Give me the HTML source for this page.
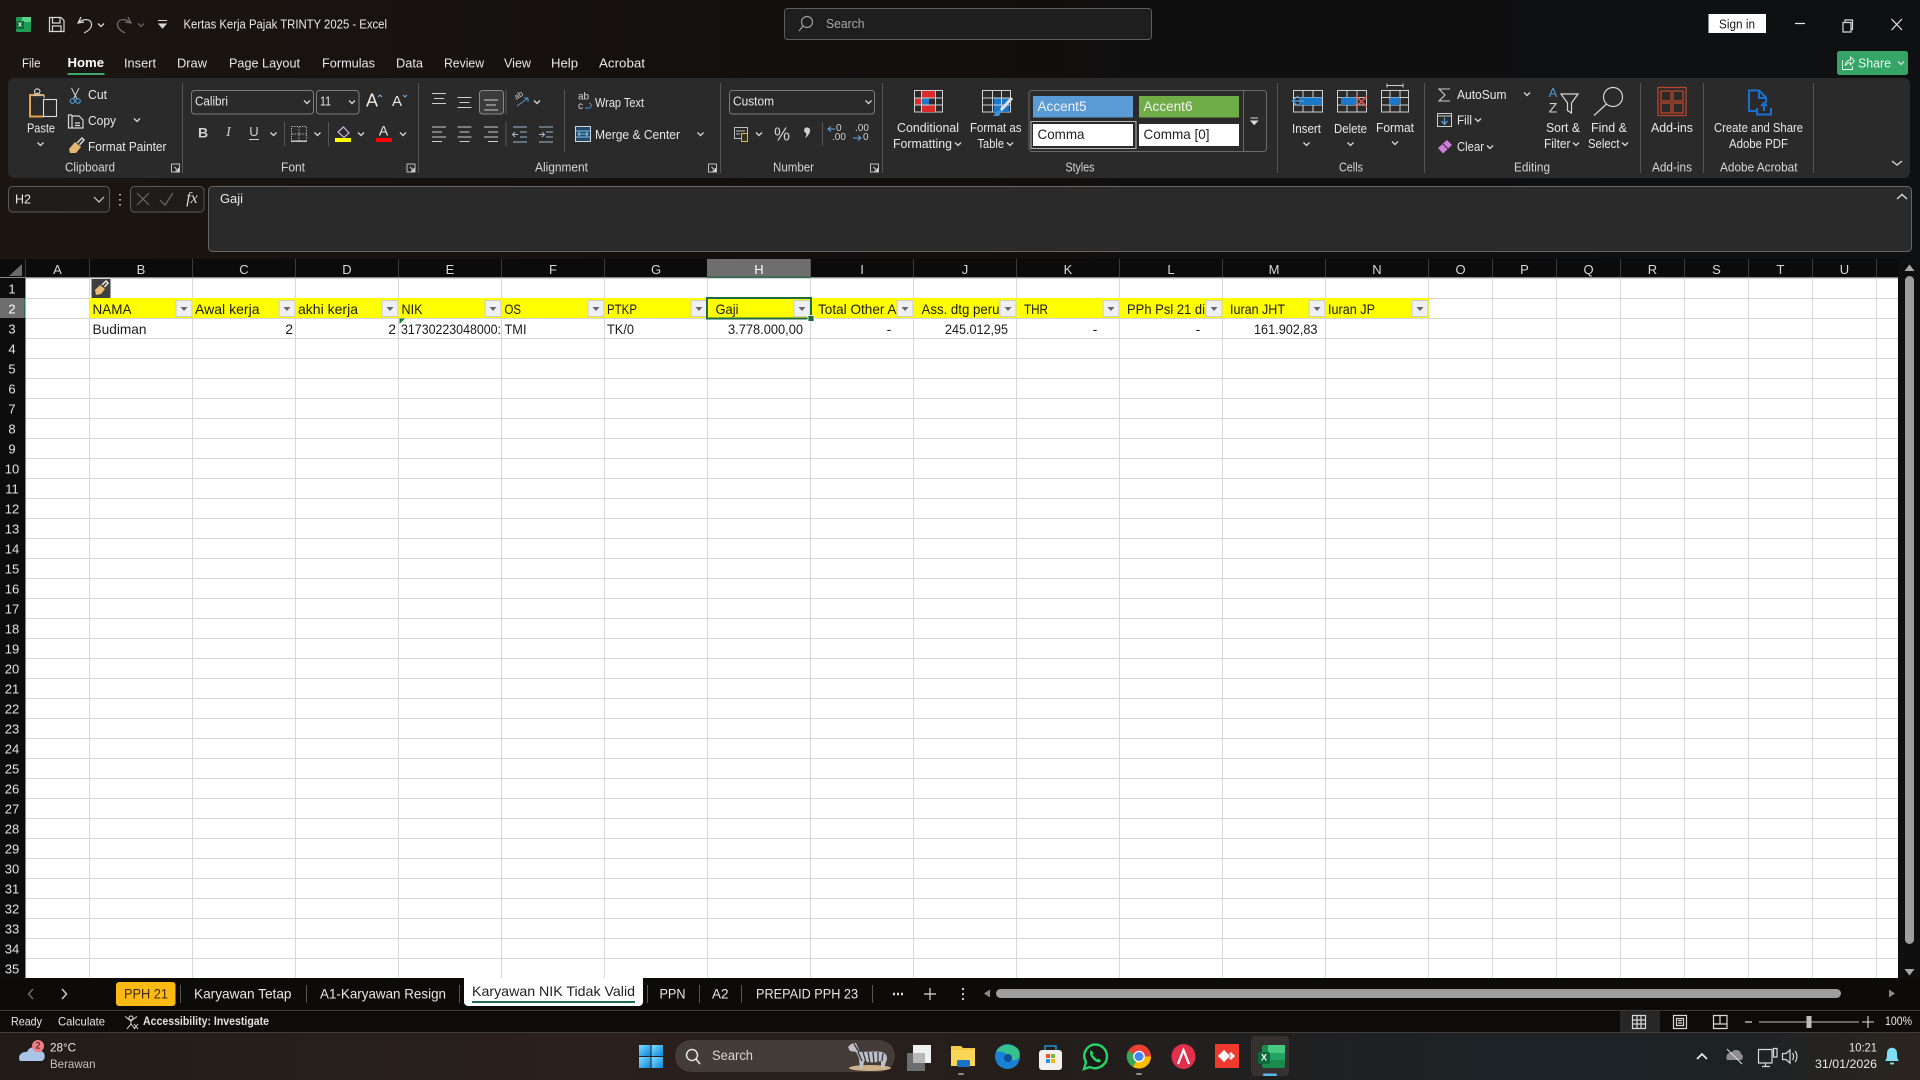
<!DOCTYPE html>
<html lang="id"><head><meta charset="utf-8"><title>Kertas Kerja Pajak TRINTY 2025 - Excel</title>
<style>
html,body{margin:0;padding:0;background:#111;width:1920px;height:1080px;overflow:hidden}
svg{display:block;position:absolute;left:0;top:0}
text{font-family:"Liberation Sans",sans-serif;dominant-baseline:central;fill:#e8e8e8;font-size:13px;transform:translateY(-.5px)}
.c{font-size:14px;fill:#1c1c1c}
.l{font-size:12.5px;fill:#d4d4d4}
.h{font-size:13px;fill:#d8d8d8;text-anchor:middle;transform:none}
.r{font-size:13px;fill:#e4e4e4;text-anchor:middle;transform:translateY(.5px)}
.m{text-anchor:middle}
.e{text-anchor:end}
.s{fill:none;stroke:#d8d8d8;stroke-width:1.2}
.d{fill:none;stroke:#6f6f6f;stroke-width:1.2}
</style></head><body>
<svg width="1920" height="1080" viewBox="0 0 1920 1080" xmlns="http://www.w3.org/2000/svg">
<defs>
<linearGradient id="mica" x1="0" x2="1" y1="0" y2="0"><stop offset="0" stop-color="#1c1612"/><stop offset=".4" stop-color="#130f0d"/><stop offset=".7" stop-color="#0f0f10"/><stop offset="1" stop-color="#0e1012"/></linearGradient>
<linearGradient id="tb" x1="0" x2="1" y1="0" y2="0"><stop offset="0" stop-color="#221c19"/><stop offset=".3" stop-color="#2a211c"/><stop offset=".55" stop-color="#241e1b"/><stop offset=".78" stop-color="#1c2226"/><stop offset=".9" stop-color="#1d2225"/><stop offset="1" stop-color="#2b241f"/></linearGradient>
<linearGradient id="win" x1="0" x2="1" y1="0" y2="1"><stop offset="0" stop-color="#7fdcff"/><stop offset="1" stop-color="#0b86dc"/></linearGradient>
<pattern id="rows" x="0" y="279" width="10" height="20" patternUnits="userSpaceOnUse"><rect y="19" width="10" height="1" fill="#d6d6d6"/></pattern>
<path id="ch" d="M-3 -1.5L0 1.5L3 -1.5" fill="none" stroke="#d8d8d8" stroke-width="1.3"/>
<g id="lc"><rect x="-4" y="-4" width="8" height="8" fill="none" stroke="#bdbdbd"/><path d="M-1 -1L3 3M3 0V3H0" fill="none" stroke="#d8d8d8"/></g>
<g id="fb"><rect width="16" height="16" fill="#eef0f6" stroke="#c4c4cc" stroke-width=".8"/><path d="M4.5 6.5H11.5L8 10.5Z" fill="#666"/></g>
</defs>

<rect width="1920" height="1080" fill="url(#mica)"/>

<!-- Title bar -->
<rect x="16" y="17" width="15" height="15" rx="1.5" fill="#1f9d55"/><rect x="22" y="17" width="9" height="5" fill="#5ad08a"/><rect x="16" y="21" width="8" height="8" fill="#0f6b3a"/><text x="20" y="25.5" class="m" style="font-size:7px;font-weight:bold;fill:#fff">x</text>
<path class="s" d="M49.5 17.5H61L64 20.5V31.5H49.5ZM52.5 17.5V23H60V17.5M52.5 31.5V26H61V31.5"/>
<path class="s" stroke-width="1.5" d="M81 17L78 23L84 22M78.5 22.5C84 18 91 19 91.5 24C92 28 88 31 84 33"/>
<use href="#ch" x="101" y="25"/>
<path class="d" d="M128 17L131 23L125 22M130.5 22.5C125 18 118 19 117.5 24C117 28 121 31 125 33"/>
<use href="#ch" x="141" y="25" opacity=".4"/>
<path d="M158 20.5H167M159 24H166L162.5 28Z" fill="#d8d8d8" stroke="#d8d8d8" stroke-width="1"/>
<text x="183.5" y="25" textLength="203.5" lengthAdjust="spacingAndGlyphs" style="font-size:12.5px">Kertas Kerja Pajak TRINTY 2025  -  Excel</text>

<rect x="784.5" y="8.5" width="367" height="31" rx="3" fill="#1e1e1e" stroke="#5c5c5c"/>
<circle cx="807" cy="22" r="5.5" fill="none" stroke="#9c9c9c" stroke-width="1.2"/><path d="M803 26L799 31" stroke="#9c9c9c" stroke-width="1.2"/>
<text x="826" y="24" textLength="38.5" lengthAdjust="spacingAndGlyphs" style="fill:#a8a8a8">Search</text>

<rect x="1708.5" y="14" width="57.5" height="19" fill="#fff"/>
<text x="1719" y="25" textLength="36" lengthAdjust="spacingAndGlyphs" style="fill:#1a1a1a;font-size:12.5px">Sign in</text>
<path d="M1795 23.5H1805" stroke="#e8e8e8" stroke-width="1.2"/>
<path class="s" d="M1843 22.5H1851V32H1843ZM1845 22.5V20H1852.5V29.5H1851"/>
<path d="M1891.5 19L1902 30M1902 19L1891.5 30" stroke="#e8e8e8" stroke-width="1.2"/>

<!-- Tabs -->
<text x="22" y="63.5" textLength="18.5" lengthAdjust="spacingAndGlyphs">File</text>
<text x="67.5" y="63.5" textLength="36.5" lengthAdjust="spacingAndGlyphs" style="font-weight:bold;fill:#fff;font-size:12.5px">Home</text>
<rect x="67.5" y="73" width="37" height="2" fill="#3fa66f"/>
<text x="124" y="63.5" textLength="32" lengthAdjust="spacingAndGlyphs">Insert</text>
<text x="177" y="63.5" textLength="30" lengthAdjust="spacingAndGlyphs">Draw</text>
<text x="229" y="63.5" textLength="71" lengthAdjust="spacingAndGlyphs">Page Layout</text>
<text x="322" y="63.5" textLength="53" lengthAdjust="spacingAndGlyphs">Formulas</text>
<text x="396" y="63.5" textLength="27" lengthAdjust="spacingAndGlyphs">Data</text>
<text x="444" y="63.5" textLength="40" lengthAdjust="spacingAndGlyphs">Review</text>
<text x="504" y="63.5" textLength="27" lengthAdjust="spacingAndGlyphs">View</text>
<text x="551" y="63.5" textLength="27" lengthAdjust="spacingAndGlyphs">Help</text>
<text x="599" y="63.5" textLength="46" lengthAdjust="spacingAndGlyphs">Acrobat</text>
<rect x="1837" y="51" width="71" height="24" rx="2.5" fill="#35a567"/>
<path d="M1842.5 60V69.5H1852.5V66M1845 66C1846 61 1848.5 60 1850.5 60V57L1854.5 61L1850.5 65V62.5C1848.5 62.5 1847 63.5 1845 66Z" fill="none" stroke="#e8f5ec" stroke-width=".9"/>
<text x="1858" y="63.5" textLength="33" lengthAdjust="spacingAndGlyphs" style="fill:#eef7f1">Share</text>
<use href="#ch" x="1901" y="63"/>

<!-- Ribbon -->
<rect x="8" y="78" width="1902" height="100" rx="6" fill="#2a2a2a"/>
<g fill="#555">
<rect x="182" y="83" width="1" height="90"/><rect x="418" y="83" width="1" height="90"/><rect x="720" y="83" width="1" height="90"/><rect x="882" y="83" width="1" height="90"/><rect x="1277" y="83" width="1" height="90"/><rect x="1424" y="83" width="1" height="90"/><rect x="1640" y="83" width="1" height="90"/><rect x="1703" y="83" width="1" height="90"/><rect x="1813" y="83" width="1" height="90"/>
<rect x="284" y="122" width="1" height="24"/><rect x="328" y="122" width="1" height="24"/><rect x="505.5" y="90" width="1" height="24"/><rect x="505.5" y="122" width="1" height="24"/><rect x="564" y="90" width="1" height="62"/><rect x="822" y="122" width="1" height="24"/>
</g>
<!-- Clipboard -->
<path d="M44 95H30V116.5H44" fill="none" stroke="#e0a24a" stroke-width="2"/><path d="M44 95V98M35 93.5H39L40 91.5C40 88 34.5 88 34.5 91.5ZM33.5 95.5H41" fill="none" stroke="#c9c9c9" stroke-width="1.2"/>
<rect x="43.5" y="99.5" width="13" height="17" fill="#2a2a2a" stroke="#dcdcdc" stroke-width="1.1"/>
<text x="41" y="128.5" class="m" textLength="28" lengthAdjust="spacingAndGlyphs">Paste</text>
<use href="#ch" x="40.5" y="144"/>
<path d="M71.5 88L77 99M79 88L73.5 99" stroke="#d4d4d4" fill="none"/><circle cx="72.5" cy="101" r="2.3" fill="none" stroke="#4f9ad1" stroke-width="1.2"/><circle cx="78" cy="101" r="2.3" fill="none" stroke="#4f9ad1" stroke-width="1.2"/>
<text x="88" y="95" textLength="19" lengthAdjust="spacingAndGlyphs">Cut</text>
<path class="s" d="M72 115H68.5V128H72M72 128V115M72 116H79L83 120V128H72ZM75 123H80M75 125.5H80"/>
<text x="88" y="121" textLength="28" lengthAdjust="spacingAndGlyphs">Copy</text><use href="#ch" x="137" y="120"/>
<path d="M69 149L75 142L81 147L76 153L70 153Z" fill="#e5b872"/><path d="M77 143L82 138L84 140L79.5 145" fill="none" stroke="#d8d8d8" stroke-width="1.5"/>
<text x="88" y="147" textLength="78.5" lengthAdjust="spacingAndGlyphs">Format Painter</text>
<text x="90" y="168" class="l m" textLength="50" lengthAdjust="spacingAndGlyphs">Clipboard</text><use href="#lc" x="175.5" y="168"/>
<!-- Font -->
<rect x="191.5" y="90.5" width="122" height="23.5" rx="3" fill="#2a2a2a" stroke="#7c7c7c"/>
<text x="195" y="102" textLength="33" lengthAdjust="spacingAndGlyphs" style="font-size:12.5px">Calibri</text><use href="#ch" x="307" y="102"/>
<rect x="316.5" y="90.5" width="42.5" height="23.5" rx="3" fill="#2a2a2a" stroke="#7c7c7c"/>
<text x="320" y="102" textLength="11" lengthAdjust="spacingAndGlyphs" style="font-size:12.5px">11</text><use href="#ch" x="352" y="102"/>
<text x="372" y="101" class="m" style="font-size:18px">A</text><path d="M378 97L380 95L382 97" fill="none" stroke="#6db4ea"/>
<text x="397" y="102" class="m" style="font-size:15px">A</text><path d="M403 95L405 97L407 95" fill="none" stroke="#6db4ea"/>
<text x="203" y="133" class="m" style="font-weight:bold;font-size:14px;fill:#cfcfcf">B</text>
<text x="228.5" y="133" class="m" style="font-family:'Liberation Serif',serif;font-style:italic;font-size:14px;fill:#cfcfcf">I</text>
<text x="254" y="132" class="m" style="font-size:13px;fill:#cfcfcf">U</text><rect x="249" y="139" width="10" height="1" fill="#cfcfcf"/>
<use href="#ch" x="273.5" y="134"/>
<rect x="291.5" y="126.5" width="15" height="15" fill="none" stroke="#bdbdbd" stroke-dasharray="1.3 1.3"/><path d="M299 127V141M292 134H306" stroke="#bdbdbd" stroke-dasharray="1.3 1.3"/><rect x="291" y="140.5" width="16" height="1.2" fill="#dcdcdc"/>
<use href="#ch" x="317.5" y="134"/>
<path d="M338 132L343.5 127L349 133L344 137.5Z" fill="none" stroke="#c5b3ea" stroke-width="1.2"/>
<rect x="335" y="138" width="16" height="4" fill="#ffff00"/><use href="#ch" x="361" y="134"/>
<text x="383.5" y="131" class="m" style="font-size:14px">A</text><rect x="376" y="138" width="16" height="4" fill="#ff0000"/><use href="#ch" x="403" y="134"/>
<text x="293" y="168" class="l m" textLength="24" lengthAdjust="spacingAndGlyphs">Font</text><use href="#lc" x="411" y="168"/>
<!-- Alignment -->
<rect x="479.5" y="90.5" width="24" height="23.5" rx="3" fill="#3b3b3b" stroke="#8a8a8a"/>
<path d="M432 93.5H446M434 98.5H444M432 103.5H446M457.5 97.5H471.5M459.5 102.5H469.5M457.5 107.5H471.5" stroke="#cfcfcf" fill="none"/>
<path d="M484 100H498M486 105H496M484 110H498" stroke="#cfcfcf" fill="none"/>
<text x="515" y="98" style="font-size:8px;fill:#cfcfcf;transform:rotate(-35deg);transform-origin:515px 98px">ab</text><path d="M517 106L528 98M528 98H524M528 98V102" stroke="#4d9ad8" fill="none"/><use href="#ch" x="537" y="102"/>
<path d="M432 127H446M432 132H442M432 137H446M432 141.5H442M457.5 127H471.5M459.5 132H469.5M457.5 137H471.5M459.5 141.5H469.5M484 127H498M488 132H498M484 137H498M488 141.5H498" stroke="#cfcfcf" fill="none"/>
<path d="M513 127H527M513 142H527M520 132H527M520 137H527M518 134.5H512.5M515 132L512.5 134.5L515 137" stroke="#9fb8cf" fill="none"/>
<path d="M539 127H553M539 142H553M546 132H553M546 137H553M539 134.5H544.5M542 132L544.5 134.5L542 137" stroke="#9fb8cf" fill="none"/>
<text x="578" y="97.5" style="font-size:10px;fill:#d8d8d8">ab</text><text x="578" y="107" style="font-size:10px;fill:#d8d8d8">c</text><path d="M585 108H589C592 108 592 103 589 103" stroke="#4d9ad8" fill="none"/>
<text x="595" y="103" textLength="49" lengthAdjust="spacingAndGlyphs">Wrap Text</text>
<rect x="575.5" y="126.5" width="15" height="15" fill="#274a66" stroke="#c8d8e6"/><path d="M576 131H590M576 137H590M578 134H588M580 132L578 134L580 136M586 132L588 134L586 136" stroke="#7fc0ee" fill="none"/>
<text x="595" y="135" textLength="85" lengthAdjust="spacingAndGlyphs">Merge &amp; Center</text><use href="#ch" x="700.5" y="134"/>
<text x="561.5" y="168" class="l m" textLength="53" lengthAdjust="spacingAndGlyphs">Alignment</text><use href="#lc" x="712.5" y="168"/>
<!-- Number -->
<rect x="729.5" y="90.5" width="145" height="23.5" rx="3" fill="#2a2a2a" stroke="#7c7c7c"/>
<text x="733" y="102" textLength="41" lengthAdjust="spacingAndGlyphs" style="font-size:12.5px">Custom</text><use href="#ch" x="868.5" y="102"/>
<rect x="734.5" y="127.5" width="13" height="11" fill="none" stroke="#bdbdbd"/><rect x="741.5" y="133.5" width="6" height="8" fill="#3a3218" stroke="#d9b94f" stroke-width="1"/><path d="M736 131H745M736 134H740" stroke="#bdbdbd"/>
<use href="#ch" x="759" y="134"/>
<text x="782" y="135" class="m" style="font-size:18px;fill:#cfcfcf">%</text>
<path d="M806 127.5C810 127 811 130 809.5 133C808.5 135 807 137 805 138C806.5 135.5 806.5 134 806 133C803.5 132.5 803.5 128 806 127.5Z" fill="#cfcfcf"/>
<text x="836" y="129" style="font-size:10px;fill:#d0d0d0">0</text><text x="832" y="138" style="font-size:10px;fill:#d0d0d0">.00</text><path d="M835 129H828M831 126.5L828 129L831 131.5" stroke="#5aa6df" fill="none"/>
<text x="855" y="129" style="font-size:10px;fill:#d0d0d0">.00</text><text x="863" y="138" style="font-size:10px;fill:#d0d0d0">0</text><path d="M853 138H861M858 135.5L861 138L858 140.5" stroke="#5aa6df" fill="none"/>
<text x="793.5" y="168" class="l m" textLength="41" lengthAdjust="spacingAndGlyphs">Number</text><use href="#lc" x="874.5" y="168"/>
<!-- Conditional -->
<rect x="914.5" y="90.5" width="28" height="21.5" fill="none" stroke="#cfcfcf"/>
<rect x="921" y="91" width="14" height="7" fill="#d92b2b"/><rect x="915" y="98" width="7" height="7" fill="#d92b2b"/><rect x="922" y="98" width="7" height="7" fill="#1c78c8"/><rect x="921" y="105" width="14" height="7" fill="#d92b2b"/>
<path d="M921.5 90V112M935.5 90V112M914.5 98H942M914.5 105H942" stroke="#cfcfcf" fill="none"/>
<text x="897" y="128" textLength="62" lengthAdjust="spacingAndGlyphs">Conditional</text>
<text x="893" y="144" textLength="59" lengthAdjust="spacingAndGlyphs">Formatting</text><use href="#ch" x="958" y="144"/>
<rect x="982.5" y="90.5" width="28" height="21.5" fill="none" stroke="#cfcfcf"/><rect x="994" y="98" width="15" height="14" fill="#1c78c8"/>
<path d="M992.5 90V112M1001.5 90V112M982.5 98H1011M982.5 105H1011" stroke="#cfcfcf" fill="none"/>
<path d="M1012 98L1001 110" stroke="#e0e0e0" stroke-width="3"/><path d="M998 110L1002 111L999 116L993 116Z" fill="#3d8fd6"/>
<text x="970" y="128" textLength="51.5" lengthAdjust="spacingAndGlyphs">Format as</text>
<text x="977.5" y="144" textLength="26.5" lengthAdjust="spacingAndGlyphs">Table</text><use href="#ch" x="1010" y="144"/>
<!-- Styles gallery -->
<rect x="1029" y="90.5" width="237.5" height="61" rx="3" fill="#2a2a2a" stroke="#6a6a6a"/>
<path d="M1243.5 90.5V151.5" stroke="#6a6a6a"/>
<rect x="1033" y="96" width="100" height="21.5" fill="#5b9bd5"/><text x="1037.5" y="106.5" textLength="49" lengthAdjust="spacingAndGlyphs" style="font-size:14px;fill:#f2f2f2">Accent5</text>
<rect x="1139" y="96" width="100" height="21.5" fill="#70ad47"/><text x="1143.5" y="106.5" textLength="49" lengthAdjust="spacingAndGlyphs" style="font-size:14px;fill:#f2f2f2">Accent6</text>
<rect x="1031" y="121.5" width="105" height="27" fill="none" stroke="#b8b8b8"/>
<rect x="1033" y="124" width="100" height="22" fill="#fff"/><text x="1037.5" y="134.5" textLength="47" lengthAdjust="spacingAndGlyphs" style="font-size:14px;fill:#222">Comma</text>
<rect x="1139" y="124" width="100" height="22" fill="#fff"/><text x="1143.5" y="134.5" textLength="66" lengthAdjust="spacingAndGlyphs" style="font-size:14px;fill:#222">Comma [0]</text>
<path d="M1250.5 118H1258M1251 121H1257.5L1254.2 124.5Z" fill="#d8d8d8" stroke="#d8d8d8"/>
<text x="1080" y="168" class="l m" textLength="29" lengthAdjust="spacingAndGlyphs">Styles</text>
<!-- Cells -->
<g fill="none" stroke="#cfcfcf"><rect x="1293.5" y="90.5" width="29" height="21.5"/><path d="M1303 90V112M1313 90V112M1293 97.5H1323M1293 105H1323"/></g>
<rect x="1299" y="97.5" width="23" height="7.5" fill="#1c78c8"/><path d="M1304 101H1293M1298 96L1292.5 101L1298 106" fill="none" stroke="#4f9ad1" stroke-width="1.5"/>
<g fill="none" stroke="#cfcfcf"><rect x="1337.5" y="90.5" width="29" height="21.5"/><path d="M1347 90V112M1357 90V112M1337 97.5H1367M1337 105H1367"/></g>
<rect x="1341" y="97.5" width="15" height="7.5" fill="#1c78c8"/><path d="M1356 96L1367 107M1367 96L1356 107" stroke="#d4544c" stroke-width="1.6"/>
<g fill="none" stroke="#cfcfcf"><rect x="1381.5" y="90.5" width="27" height="21.5"/><path d="M1390 90V112M1400 90V112M1381 97.5H1409M1381 105H1409M1387 85.5H1403M1387 83.5V87.5M1403 83.5V87.5"/></g>
<rect x="1390" y="97.5" width="10" height="7.5" fill="#1c78c8"/>
<text x="1306.5" y="129" class="m" textLength="29" lengthAdjust="spacingAndGlyphs">Insert</text><use href="#ch" x="1306.5" y="144"/>
<text x="1350.5" y="129" class="m" textLength="33" lengthAdjust="spacingAndGlyphs">Delete</text><use href="#ch" x="1350.5" y="144"/>
<text x="1395" y="128" class="m" textLength="38" lengthAdjust="spacingAndGlyphs">Format</text><use href="#ch" x="1395" y="143"/>
<text x="1351" y="168" class="l m" textLength="24" lengthAdjust="spacingAndGlyphs">Cells</text>
<!-- Editing -->
<path d="M1450 89H1439L1445 95L1439 101H1450" fill="none" stroke="#cfcfcf" stroke-width="1.1"/>
<text x="1457" y="95" textLength="49.5" lengthAdjust="spacingAndGlyphs">AutoSum</text><use href="#ch" x="1527" y="94"/>
<rect x="1437.5" y="113.5" width="14" height="13" fill="none" stroke="#cfcfcf"/><path d="M1437.5 116H1451.5" stroke="#cfcfcf"/><path d="M1444.5 117.5V124M1441.5 121L1444.5 124.5L1447.5 121" fill="none" stroke="#5aa6df" stroke-width="1.2"/>
<text x="1457" y="120.5" textLength="15" lengthAdjust="spacingAndGlyphs">Fill</text><use href="#ch" x="1478" y="120"/>
<path d="M1438 148L1447 140L1452 145L1443 153.5Z" fill="#cf7fd8"/><path d="M1443 144L1448 149" stroke="#2a2a2a"/>
<text x="1457" y="147" textLength="27" lengthAdjust="spacingAndGlyphs">Clear</text><use href="#ch" x="1490" y="147"/>
<text x="1553" y="93" class="m" style="font-size:13px;fill:#4f9ad1">A</text><text x="1553" y="108" class="m" style="font-size:14px;fill:#d0d0d0">Z</text>
<path d="M1561 94H1578L1571.5 103V113L1567.5 110.5V103Z" fill="none" stroke="#d4d4d4" stroke-width="1.2"/>
<text x="1546" y="128" textLength="34" lengthAdjust="spacingAndGlyphs">Sort &amp;</text>
<text x="1544" y="144" textLength="26.5" lengthAdjust="spacingAndGlyphs">Filter</text><use href="#ch" x="1576" y="144"/>
<circle cx="1613" cy="97" r="9.5" fill="none" stroke="#d4d4d4" stroke-width="1.2"/><path d="M1606.5 104L1594 115.5" stroke="#d4d4d4" stroke-width="1.2"/>
<text x="1591" y="128" textLength="36" lengthAdjust="spacingAndGlyphs">Find &amp;</text>
<text x="1588" y="144" textLength="31.5" lengthAdjust="spacingAndGlyphs">Select</text><use href="#ch" x="1625" y="144"/>
<text x="1532" y="168" class="l m" textLength="36" lengthAdjust="spacingAndGlyphs">Editing</text>
<!-- Add-ins -->
<g fill="none" stroke="#b7452c" stroke-width="1.3"><rect x="1658" y="87.5" width="28" height="28"/><rect x="1661" y="91" width="10" height="10"/><rect x="1673" y="91" width="10" height="10"/><rect x="1661" y="103" width="10" height="10"/><rect x="1673" y="103" width="10" height="10"/></g>
<text x="1672" y="128" class="m" textLength="42" lengthAdjust="spacingAndGlyphs">Add-ins</text>
<text x="1672" y="168" class="l m" textLength="40" lengthAdjust="spacingAndGlyphs">Add-ins</text>
<!-- Acrobat -->
<path d="M1756 111H1749V90.5H1759L1766 97.5V103M1759 91V98H1766" fill="none" stroke="#1a6fd0" stroke-width="2"/><path d="M1757 108V114.5H1771V108M1764 111V103M1761 106L1764 103L1767 106" fill="none" stroke="#1a6fd0" stroke-width="2"/>
<text x="1714" y="128" textLength="89" lengthAdjust="spacingAndGlyphs">Create and Share</text>
<text x="1729" y="144" textLength="59" lengthAdjust="spacingAndGlyphs">Adobe PDF</text>
<text x="1720" y="168" class="l" textLength="77.5" lengthAdjust="spacingAndGlyphs">Adobe Acrobat</text>
<path d="M1892 161L1897 165L1902 161" fill="none" stroke="#d8d8d8" stroke-width="1.3"/>

<!-- Formula bar -->
<rect x="8.5" y="186.5" width="101" height="25.5" rx="4" fill="#1f1c1a" stroke="#5a5a5a"/>
<text x="15" y="200" textLength="16" lengthAdjust="spacingAndGlyphs" style="font-size:12.5px">H2</text>
<path d="M94 197L99 202L104 197" fill="none" stroke="#cfcfcf" stroke-width="1.2"/>
<path d="M120 194V195.5M120 199V200.5M120 204V205.5" stroke="#cfcfcf" stroke-width="1.6"/>
<rect x="130.5" y="186.5" width="73.5" height="25.5" rx="4" fill="#1f1c1a" stroke="#5a5a5a"/>
<path d="M137 193L149 205M149 193L137 205" stroke="#6a6a6a" stroke-width="1.2"/><path d="M160 200L165 205L173 193" fill="none" stroke="#6a6a6a" stroke-width="1.2"/>
<text x="192" y="199" class="m" style="font-family:'Liberation Serif',serif;font-style:italic;font-size:16px;fill:#dcdcdc">fx</text>
<rect x="208.5" y="186.5" width="1703" height="65" rx="4" fill="#2a2a2a" stroke="#6a6664"/>
<text x="220" y="199.5" textLength="23" lengthAdjust="spacingAndGlyphs" style="font-size:12.5px">Gaji</text>
<path d="M1897 199L1902 194.5L1907 199" fill="none" stroke="#d8d8d8" stroke-width="1.4"/>

<!-- Grid -->
<rect x="0" y="259" width="1898" height="19" fill="#0b0b0b"/>
<rect x="0" y="278" width="25.5" height="700" fill="#0c0c0c"/>
<rect x="25.5" y="278" width="1872.5" height="700" fill="#fff"/>
<rect x="25.5" y="278" width="1872.5" height="700" fill="url(#rows)"/>
<path fill="none" stroke="#d6d6d6" d="M89.5 278V978M192.5 278V978M295.5 278V978M398.5 278V978M501.5 278V978M604.5 278V978M707.5 278V978M810.5 278V978M913.5 278V978M1016.5 278V978M1119.5 278V978M1222.5 278V978M1325.5 278V978M1428.5 278V978M1492.5 278V978M1556.5 278V978M1620.5 278V978M1684.5 278V978M1748.5 278V978M1812.5 278V978M1876.5 278V978"/>
<path fill="none" stroke="#3c3c3c" d="M25.5 259V278M89.5 259V278M192.5 259V278M295.5 259V278M398.5 259V278M501.5 259V278M604.5 259V278M707.5 259V278M810.5 259V278M913.5 259V278M1016.5 259V278M1119.5 259V278M1222.5 259V278M1325.5 259V278M1428.5 259V278M1492.5 259V278M1556.5 259V278M1620.5 259V278M1684.5 259V278M1748.5 259V278M1812.5 259V278M1876.5 259V278"/>
<rect x="0" y="277" width="1898" height="1" fill="#8a8a8a"/>
<path d="M9 276H22V264Z" fill="#6a6a6a"/>
<rect x="707" y="259" width="103.5" height="19" fill="#6e6e6e"/><rect x="707" y="276.5" width="103.5" height="1.5" fill="#2f6b4f"/>
<text x="57.5" y="269.5" class="h">A</text><text x="141" y="269.5" class="h">B</text><text x="244" y="269.5" class="h">C</text><text x="347" y="269.5" class="h">D</text><text x="450" y="269.5" class="h">E</text><text x="553" y="269.5" class="h">F</text><text x="656" y="269.5" class="h">G</text><text x="759" y="269.5" class="h" style="fill:#fff">H</text><text x="862" y="269.5" class="h">I</text><text x="965" y="269.5" class="h">J</text><text x="1068" y="269.5" class="h">K</text><text x="1171" y="269.5" class="h">L</text><text x="1274" y="269.5" class="h">M</text><text x="1377" y="269.5" class="h">N</text><text x="1460.5" y="269.5" class="h">O</text><text x="1524.5" y="269.5" class="h">P</text><text x="1588.5" y="269.5" class="h">Q</text><text x="1652.5" y="269.5" class="h">R</text><text x="1716.5" y="269.5" class="h">S</text><text x="1780.5" y="269.5" class="h">T</text><text x="1844.5" y="269.5" class="h">U</text>
<rect x="0" y="298" width="25.5" height="20" fill="#6e6e6e"/><rect x="24" y="298" width="1.5" height="20" fill="#2f6b4f"/>
<text x="12" y="288.5" class="r">1</text><text x="12" y="308.5" class="r" style="fill:#fff">2</text><text x="12" y="328.5" class="r">3</text><text x="12" y="348.5" class="r">4</text><text x="12" y="368.5" class="r">5</text><text x="12" y="388.5" class="r">6</text><text x="12" y="408.5" class="r">7</text><text x="12" y="428.5" class="r">8</text><text x="12" y="448.5" class="r">9</text><text x="12" y="468.5" class="r">10</text><text x="12" y="488.5" class="r">11</text><text x="12" y="508.5" class="r">12</text><text x="12" y="528.5" class="r">13</text><text x="12" y="548.5" class="r">14</text><text x="12" y="568.5" class="r">15</text><text x="12" y="588.5" class="r">16</text><text x="12" y="608.5" class="r">17</text><text x="12" y="628.5" class="r">18</text><text x="12" y="648.5" class="r">19</text><text x="12" y="668.5" class="r">20</text><text x="12" y="688.5" class="r">21</text><text x="12" y="708.5" class="r">22</text><text x="12" y="728.5" class="r">23</text><text x="12" y="748.5" class="r">24</text><text x="12" y="768.5" class="r">25</text><text x="12" y="788.5" class="r">26</text><text x="12" y="808.5" class="r">27</text><text x="12" y="828.5" class="r">28</text><text x="12" y="848.5" class="r">29</text><text x="12" y="868.5" class="r">30</text><text x="12" y="888.5" class="r">31</text><text x="12" y="908.5" class="r">32</text><text x="12" y="928.5" class="r">33</text><text x="12" y="948.5" class="r">34</text><text x="12" y="968.5" class="r">35</text>

<!-- Paste options icon -->
<rect x="91.5" y="279" width="19" height="19" fill="#3f3f3f"/>
<path d="M95 290L100 285L105 289L101 294L96 295Z" fill="#e6bb75"/><path d="M102 285L106 281L108 283L104.5 287" fill="none" stroke="#eee" stroke-width="1.5"/>

<!-- Header row -->
<rect x="89.5" y="298" width="1340" height="20" fill="#ffff00"/>
<text class="c" x="92.5" y="309.5" textLength="39" lengthAdjust="spacingAndGlyphs">NAMA</text><use href="#fb" x="176" y="300.5"/>
<text class="c" x="195" y="309.5" textLength="64.5" lengthAdjust="spacingAndGlyphs">Awal kerja</text><use href="#fb" x="279" y="300.5"/>
<text class="c" x="298" y="309.5" textLength="60" lengthAdjust="spacingAndGlyphs">akhi kerja</text><use href="#fb" x="382" y="300.5"/>
<text class="c" x="401.5" y="309.5" textLength="21" lengthAdjust="spacingAndGlyphs">NIK</text><use href="#fb" x="485" y="300.5"/>
<text class="c" x="504.5" y="309.5" textLength="16.5" lengthAdjust="spacingAndGlyphs">OS</text><use href="#fb" x="588" y="300.5"/>
<text class="c" x="607" y="309.5" textLength="30" lengthAdjust="spacingAndGlyphs">PTKP</text><use href="#fb" x="691" y="300.5"/>
<text class="c" x="715.5" y="309.5" textLength="23" lengthAdjust="spacingAndGlyphs">Gaji</text>
<text class="c" x="818" y="309.5" textLength="78.5" lengthAdjust="spacingAndGlyphs">Total Other A</text><use href="#fb" x="897" y="300.5"/>
<text class="c" x="921.5" y="309.5" textLength="78" lengthAdjust="spacingAndGlyphs">Ass. dtg peru</text><use href="#fb" x="1000" y="300.5"/>
<text class="c" x="1024" y="309.5" textLength="24" lengthAdjust="spacingAndGlyphs">THR</text><use href="#fb" x="1103" y="300.5"/>
<text class="c" x="1127" y="309.5" textLength="78" lengthAdjust="spacingAndGlyphs">PPh Psl 21 di</text><use href="#fb" x="1206" y="300.5"/>
<text class="c" x="1230" y="309.5" textLength="55" lengthAdjust="spacingAndGlyphs">Iuran JHT</text><use href="#fb" x="1309" y="300.5"/>
<text class="c" x="1328" y="309.5" textLength="47" lengthAdjust="spacingAndGlyphs">Iuran JP</text><use href="#fb" x="1412" y="300.5"/>
<use href="#fb" x="794" y="300.5"/>
<rect x="707" y="298" width="104" height="20.5" fill="none" stroke="#1f6b43" stroke-width="2"/>
<rect x="808" y="315.5" width="6" height="6" fill="#1f6b43" stroke="#fff" stroke-width=".8"/>

<!-- Data row -->
<text class="c" x="92.5" y="329.5" textLength="54" lengthAdjust="spacingAndGlyphs">Budiman</text>
<text class="c e" x="293" y="329.5">2</text><text class="c e" x="396" y="329.5">2</text>
<text class="c" x="401" y="329.5" textLength="100" lengthAdjust="spacingAndGlyphs">31730223048000:</text>
<path d="M399.5 318.5H405L399.5 324Z" fill="#177a2f"/>
<text class="c" x="504.5" y="329.5" textLength="22" lengthAdjust="spacingAndGlyphs">TMI</text>
<text class="c" x="607" y="329.5" textLength="27" lengthAdjust="spacingAndGlyphs">TK/0</text>
<text class="c" x="728" y="329.5" textLength="75" lengthAdjust="spacingAndGlyphs">3.778.000,00</text>
<text class="c m" x="889" y="329.5">-</text>
<text class="c" x="945" y="329.5" textLength="63" lengthAdjust="spacingAndGlyphs">245.012,95</text>
<text class="c m" x="1095" y="329.5">-</text><text class="c m" x="1198" y="329.5">-</text>
<text class="c" x="1254" y="329.5" textLength="63.5" lengthAdjust="spacingAndGlyphs">161.902,83</text>

<!-- Vertical scrollbar -->
<rect x="1898" y="259" width="22" height="719" fill="#0f0f0f"/>
<path d="M1904.5 271L1909.5 264.5L1914.5 271Z" fill="#a8a8a8"/>
<rect x="1905" y="276" width="9" height="668" rx="4.5" fill="#9e9e9e"/>
<path d="M1904.5 969L1909.5 975.5L1914.5 969Z" fill="#a8a8a8"/>

<!-- Sheet tabs -->
<rect x="0" y="978" width="1920" height="32" fill="#0d0b0a"/>
<path d="M33 989L28.5 994L33 999" fill="none" stroke="#6a6a6a" stroke-width="1.5"/><path d="M62 989L66.5 994L62 999" fill="none" stroke="#c8c8c8" stroke-width="1.5"/>
<rect x="116" y="982" width="59.5" height="24" rx="3" fill="#fdb913"/>
<text x="124" y="994" textLength="44" lengthAdjust="spacingAndGlyphs" style="font-size:14px;fill:#3a2a00">PPH 21</text>
<rect x="180" y="985" width="1" height="18" fill="#555"/>
<text x="194" y="994" textLength="97.5" lengthAdjust="spacingAndGlyphs" style="font-size:14px">Karyawan Tetap</text>
<rect x="306" y="985" width="1" height="18" fill="#555"/>
<text x="320" y="994" textLength="126" lengthAdjust="spacingAndGlyphs" style="font-size:14px">A1-Karyawan Resign</text>
<rect x="459" y="985" width="1" height="18" fill="#555"/>
<path d="M464 978H643V1002C643 1004 641 1006 639 1006H468C466 1006 464 1004 464 1002Z" fill="#fff"/>
<text x="472" y="991.5" textLength="163" lengthAdjust="spacingAndGlyphs" style="font-size:14px;fill:#1f1f1f">Karyawan NIK Tidak Valid</text>
<rect x="472" y="1001" width="163" height="2" fill="#1f6b50"/>
<rect x="647" y="985" width="1" height="18" fill="#555"/>
<text x="659.5" y="994" textLength="26" lengthAdjust="spacingAndGlyphs" style="font-size:14px">PPN</text>
<rect x="699" y="985" width="1" height="18" fill="#555"/>
<text x="712" y="994" textLength="16.5" lengthAdjust="spacingAndGlyphs" style="font-size:14px">A2</text>
<rect x="741" y="985" width="1" height="18" fill="#555"/>
<text x="756" y="994" textLength="102" lengthAdjust="spacingAndGlyphs" style="font-size:14px">PREPAID PPH 23</text>
<rect x="872" y="985" width="1" height="18" fill="#555"/>
<path d="M893 994H895M897 994H899M901 994H903" stroke="#dcdcdc" stroke-width="2.4"/>
<path d="M930 988V1000M924 994H936" stroke="#dcdcdc" stroke-width="1.2"/>
<path d="M963 988V990M963 993V995M963 998V1000" stroke="#dcdcdc" stroke-width="1.8"/>
<path d="M990 989.5L984 993.5L990 997.5Z" fill="#8a8a8a"/>
<rect x="996" y="989" width="845" height="9" rx="4.5" fill="#9e9e9e"/>
<path d="M1889 989.5L1895 993.5L1889 997.5Z" fill="#8a8a8a"/>

<!-- Status bar -->
<rect x="0" y="1010" width="1920" height="22" fill="#0e0c0b"/>
<rect x="0" y="1010" width="1920" height="1" fill="#3a3a3a"/><rect x="0" y="1032" width="1920" height="1" fill="#403c3a"/>
<text x="11" y="1022" textLength="31" lengthAdjust="spacingAndGlyphs" style="font-size:12px">Ready</text>
<text x="58" y="1022" textLength="47" lengthAdjust="spacingAndGlyphs" style="font-size:12px">Calculate</text>
<circle cx="131" cy="1018" r="2" fill="none" stroke="#dcdcdc"/><path d="M125 1016.5L131 1021L137 1016.5M131 1021V1024M127 1029L131 1024L135 1029" fill="none" stroke="#dcdcdc"/><path d="M134 1024L138 1029M138 1024L134 1029" stroke="#dcdcdc"/>
<text x="143" y="1021.5" textLength="126" lengthAdjust="spacingAndGlyphs" style="font-size:12px;font-weight:bold;fill:#e2e2e2">Accessibility: Investigate</text>
<rect x="1620" y="1011" width="40" height="21" fill="#262626"/>
<path class="s" d="M1632.5 1015.5H1645.5V1028.5H1632.5ZM1637 1015.5V1028.5M1641 1015.5V1028.5M1632.5 1020H1645.5M1632.5 1024H1645.5"/>
<path class="s" d="M1673.5 1015.5H1686.5V1028.5H1673.5ZM1676.5 1018.5H1683.5V1025.5H1676.5ZM1678 1020.5H1682M1678 1023H1682"/>
<path class="s" d="M1713.5 1015.5H1727V1028.5H1713.5ZM1713.5 1024H1727M1720 1015.5V1024"/>
<path d="M1745 1022H1752" stroke="#dcdcdc" stroke-width="1.2"/>
<rect x="1759" y="1021.5" width="100" height="1" fill="#bdbdbd"/><rect x="1806.5" y="1016" width="5" height="12" fill="#bdbdbd"/>
<path d="M1862 1022H1874M1868 1016V1028" stroke="#dcdcdc" stroke-width="1.1"/>
<text x="1885" y="1021.5" textLength="27" lengthAdjust="spacingAndGlyphs" style="font-size:12px">100%</text>

<!-- Taskbar -->
<rect x="0" y="1033" width="1920" height="47" fill="url(#tb)"/>
<path d="M20 1061C17 1056 22 1051 27 1052C29 1046 38 1045 41 1051C46 1052 46 1061 41 1061Z" fill="#a9c4e6"/>
<circle cx="38" cy="1046" r="6" fill="#f47c84"/><text x="38" y="1046" class="m" style="font-size:9px;fill:#1a1a1a">2</text>
<text x="50" y="1048" textLength="26" lengthAdjust="spacingAndGlyphs" style="font-size:12px">28°C</text>
<text x="50" y="1064.5" textLength="45.5" lengthAdjust="spacingAndGlyphs" style="font-size:12px;fill:#c4c0bc">Berawan</text>
<g fill="url(#win)"><rect x="639" y="1045" width="11.5" height="11"/><rect x="651.5" y="1045" width="11.5" height="11"/><rect x="639" y="1057" width="11.5" height="11"/><rect x="651.5" y="1057" width="11.5" height="11"/></g>
<rect x="675" y="1040" width="220" height="32" rx="16" fill="#433c37"/>
<circle cx="692" cy="1055" r="5.5" fill="none" stroke="#e4e4e4" stroke-width="1.5"/><path d="M696 1059L700 1064" stroke="#e4e4e4" stroke-width="1.6"/>
<text x="712" y="1056" textLength="41" lengthAdjust="spacingAndGlyphs" style="fill:#d8d4d0;font-size:13.5px">Search</text>
<!-- zebra -->
<ellipse cx="870" cy="1068" rx="21" ry="3" fill="#cdb18a"/>
<path d="M848 1047L851 1044L856 1043L860 1052C866 1052 876 1051 882 1052C886 1053 887 1056 887 1059L884 1068H881L881 1061C876 1063 868 1063 864 1061L863 1068H860L859 1058L856 1052L850 1051Z" fill="#bfbfc8"/>
<path d="M854 1044L859 1052M858 1052L862 1061M863 1052L866 1062M868 1052L870 1063M873 1052L874 1063M878 1052L878 1062M883 1053L882 1061" stroke="#34343c" stroke-width="1.3"/>
<!-- task view -->
<rect x="907" y="1053" width="18" height="18" fill="#6e6e6e"/><rect x="913" y="1045" width="18" height="18" fill="#f0f0f0"/><rect x="913" y="1053" width="12" height="10" fill="#b8b8b8"/>
<!-- explorer -->
<path d="M951 1046H961L963 1048H975V1066H951Z" fill="#f6c945"/><rect x="951" y="1050" width="24" height="16" fill="#fbd759"/><rect x="957" y="1060" width="13" height="7" rx="1.5" fill="#1a73c8"/>
<rect x="958" y="1073" width="6" height="2" rx="1" fill="#8a8a8a"/>
<!-- edge -->
<circle cx="1007.5" cy="1056.5" r="12.5" fill="#1a82d4"/><path d="M996 1052C999 1044 1012 1042 1018 1049C1021 1053 1020 1059 1015 1060C1011 1061 1009 1058 1009 1056C1004 1051 999 1051 996 1052Z" fill="#36c28f"/><circle cx="1008" cy="1058" r="4" fill="#0d4f9c"/>
<!-- store -->
<rect x="1039" y="1050" width="23" height="20" rx="3" fill="#f1f0ee"/><path d="M1045 1050V1046H1056V1050" fill="none" stroke="#1c8fd6" stroke-width="1.6"/>
<rect x="1046" y="1054" width="4" height="4" fill="#e8572a"/><rect x="1051" y="1054" width="4" height="4" fill="#7cb82f"/><rect x="1046" y="1059" width="4" height="4" fill="#1a9be0"/><rect x="1051" y="1059" width="4" height="4" fill="#f6b900"/>
<!-- whatsapp -->
<path d="M1084 1069L1086 1062C1081 1053 1088 1044.5 1095 1044.5C1102 1044.5 1107 1050 1107 1056.5C1107 1065 1097 1071 1090 1067Z" fill="#1b1a18" stroke="#25d366" stroke-width="2.4"/>
<path d="M1091 1050C1089 1052 1090 1057 1094 1060C1097 1063 1100 1063 1101 1061L1099 1058.5L1097 1059.5L1092.5 1055L1093.5 1053Z" fill="#25d366"/>
<!-- chrome -->
<circle cx="1139" cy="1056.5" r="12" fill="#e94235"/>
<path d="M1139 1056.5L1128 1051A12 12 0 0 0 1133 1067Z" fill="#34a853"/><path d="M1139 1056.5L1133 1067A12 12 0 0 0 1151 1056.5Z" fill="#fbbc04"/>
<circle cx="1139" cy="1056.5" r="5.8" fill="#fff"/><circle cx="1139" cy="1056.5" r="4.5" fill="#4285f4"/>
<rect x="1136" y="1073" width="6" height="2" rx="1" fill="#8a8a8a"/>
<!-- red app -->
<ellipse cx="1183.5" cy="1056.5" rx="12" ry="12.5" fill="#e0304c"/><path d="M1178 1064L1183.5 1050L1189 1064" fill="none" stroke="#fff" stroke-width="2.2"/>
<!-- anydesk -->
<rect x="1215" y="1044" width="24" height="24" fill="#ef3b2d"/><path d="M1224 1050L1230 1056L1224 1062L1218 1056Z" fill="#fff"/><path d="M1231 1052L1235 1056L1231 1060L1229 1058L1231 1056L1229 1054Z" fill="#fff"/>
<!-- excel -->
<rect x="1251" y="1036" width="38" height="40" rx="4" fill="#343130"/>
<rect x="1262" y="1045" width="23" height="23" rx="2" fill="#1d8a4d"/><rect x="1268" y="1045" width="17" height="8" fill="#46c97f"/><rect x="1268" y="1053" width="17" height="7" fill="#21a366"/>
<rect x="1258" y="1052" width="12" height="12" rx="2" fill="#0e6a3a"/><text x="1264" y="1058" class="m" style="font-size:9px;font-weight:bold;fill:#fff">X</text>
<rect x="1263" y="1073.5" width="14" height="2.5" rx="1" fill="#5cb8f0"/>
<!-- tray -->
<path d="M1697 1059L1702 1054L1707 1059" fill="none" stroke="#f2f2f2" stroke-width="1.6"/>
<path d="M1727 1060C1725 1055 1729 1052 1732 1052C1734 1048 1741 1050 1741 1054C1744 1055 1743 1060 1741 1060Z" fill="#8d8d8d"/><path d="M1727 1049L1742 1064" stroke="#ddd" stroke-width="1.1"/>
<path class="s" d="M1758.5 1049.5H1772V1063H1758.5ZM1762 1066.5H1770M1765.5 1063V1066.5M1773.5 1048.5H1777V1057H1773.5Z"/>
<path class="s" d="M1782.5 1053.5H1786L1790 1050V1063L1786 1059.5H1782.5ZM1792.5 1053C1794 1055 1794 1058 1792.5 1060M1795 1051C1797.5 1054 1797.5 1059 1795 1062"/>
<text x="1877" y="1048" class="e" textLength="28" lengthAdjust="spacingAndGlyphs" style="font-size:12px">10:21</text>
<text x="1877" y="1064.5" class="e" textLength="62" lengthAdjust="spacingAndGlyphs" style="font-size:12px">31/01/2026</text>
<path d="M1885 1061C1887 1059 1887 1056 1887 1053C1887 1046 1897 1046 1897 1053C1897 1056 1897 1059 1899 1061Z" fill="#7fe0f5"/><rect x="1890" y="1062.5" width="4" height="2" rx="1" fill="#7fe0f5"/>
</svg>
</body></html>
